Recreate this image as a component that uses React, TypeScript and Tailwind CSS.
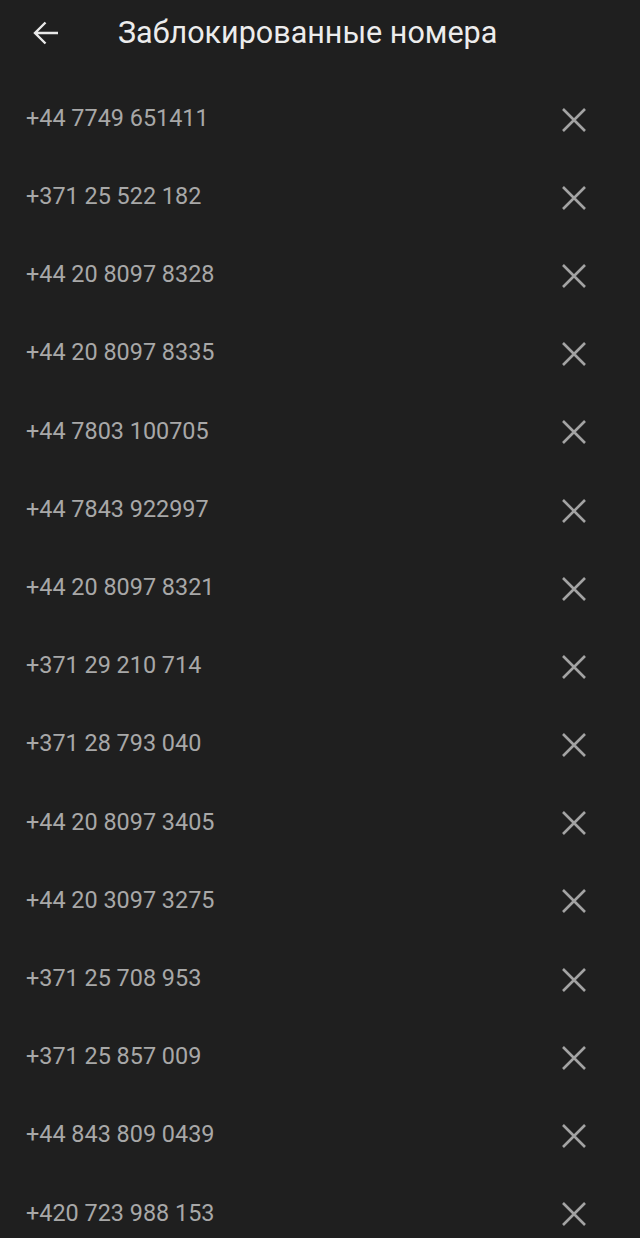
import React from 'react';

const numbers = [
  '+44 7749 651411',
  '+371 25 522 182',
  '+44 20 8097 8328',
  '+44 20 8097 8335',
  '+44 7803 100705',
  '+44 7843 922997',
  '+44 20 8097 8321',
  '+371 29 210 714',
  '+371 28 793 040',
  '+44 20 8097 3405',
  '+44 20 3097 3275',
  '+371 25 708 953',
  '+371 25 857 009',
  '+44 843 809 0439',
  '+420 723 988 153',
];

const CloseIcon = () => (
  <svg width="26" height="26" viewBox="0 0 26 26" fill="none" stroke="#a3a3a3" strokeWidth="2.6" strokeLinecap="butt" className="mt-[3px]">
    <path d="M2 2L24 24M24 2L2 24" />
  </svg>
);

const BackIcon = () => (
  <svg width="28" height="26" viewBox="0 0 28 26" fill="none" stroke="#e8e8e8" strokeWidth="2.4">
    <path d="M26 13H3M13.5 2.5L3 13l10.5 10.5" />
  </svg>
);

export default function App() {
  return (
    <div className="min-h-[1238px] w-[640px] bg-[#1f1f1f] overflow-hidden" style={{ fontFamily: 'Roboto, "Noto Sans", sans-serif' }}>
      {/* Header */}
      <div className="h-[79px] flex items-start pt-[13px]">
        <div className="w-[118px] h-[40px] flex items-center pl-[32px]">
          <BackIcon />
        </div>
        <h1 className="h-[40px] flex items-center text-[30.5px] text-[#ececec] font-normal leading-none">
          Заблокированные номера
        </h1>
      </div>

      {/* List */}
      <div className="flex flex-col">
        {numbers.map((n, i) => (
          <div key={i} className="h-[78.2px] flex items-center justify-between pl-[26px] pr-[53px]">
            <span className="text-[23.4px] text-[#a8a8a8] leading-none mt-[1px]">{n}</span>
            <CloseIcon />
          </div>
        ))}
      </div>
    </div>
  );
}
